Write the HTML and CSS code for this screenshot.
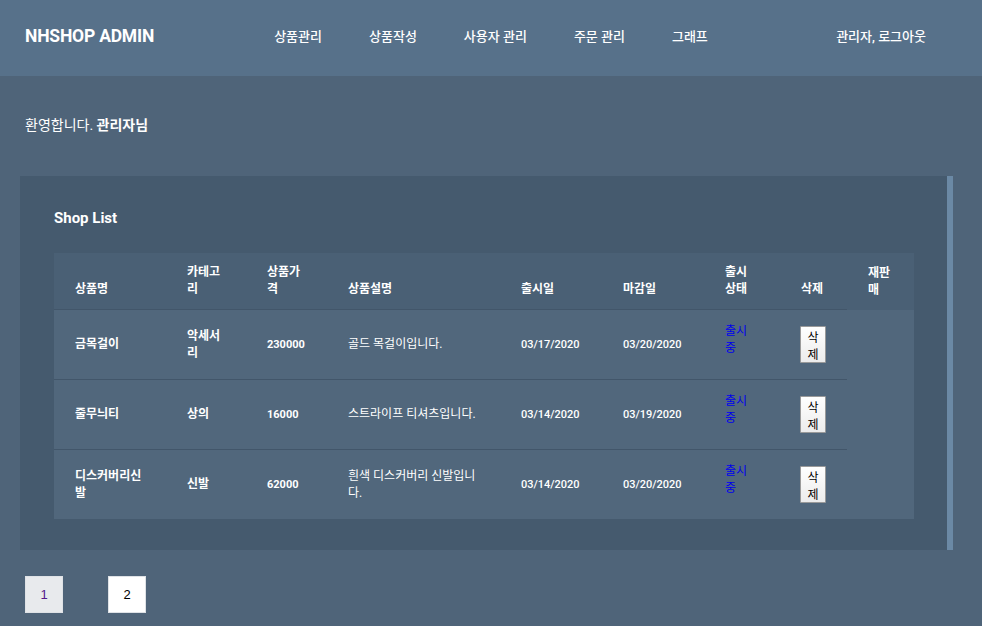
FILE: index.html
```html
<!DOCTYPE html>
<html lang="ko">
<head>
<meta charset="utf-8">
<title>NHSHOP ADMIN</title>
<link rel="stylesheet" href="styles.css">
</head>
<body>
<header class="topbar">
  <div class="logo">NHSHOP ADMIN</div>
  <nav class="nav">
    <a class="nav-link" href="#">상품관리</a>
    <a class="nav-link" href="#">상품작성</a>
    <a class="nav-link" href="#">사용자 관리</a>
    <a class="nav-link" href="#">주문 관리</a>
    <a class="nav-link" href="#">그래프</a>
  </nav>
  <div class="user">관리자, 로그아웃</div>
</header>
<main class="main">
  <p class="welcome">환영합니다. <span class="admin-name">관리자님</span></p>
  <section class="panel">
    <h2 class="panel-title">Shop List</h2>
    <table class="shop-table">
      <colgroup>
        <col class="c1"><col class="c2"><col class="c3"><col class="c4"><col class="c5"><col class="c6"><col class="c7"><col class="c8"><col class="c9">
      </colgroup>
      <thead>
        <tr>
          <th>상품명</th><th>카테고리</th><th>상품가격</th><th>상품설명</th><th>출시일</th><th>마감일</th><th class="st">출시상태</th><th>삭제</th><th>재판매</th>
        </tr>
      </thead>
      <tbody>
        <tr>
          <td class="strong">금목걸이</td><td class="strong">악세서리</td><td class="strong num">230000</td><td>골드 목걸이입니다.</td><td class="date">03/17/2020</td><td class="date">03/20/2020</td><td class="st"><a class="status" href="#">출시 중</a></td><td><button class="del">삭제</button></td>
        </tr>
        <tr>
          <td class="strong">줄무늬티</td><td class="strong">상의</td><td class="strong num">16000</td><td>스트라이프 티셔츠입니다.</td><td class="date">03/14/2020</td><td class="date">03/19/2020</td><td class="st"><a class="status" href="#">출시 중</a></td><td><button class="del">삭제</button></td>
        </tr>
        <tr>
          <td class="strong">디스커버리신발</td><td class="strong">신발</td><td class="strong num">62000</td><td>흰색 디스커버리 신발입니다.</td><td class="date">03/14/2020</td><td class="date">03/20/2020</td><td class="st"><a class="status" href="#">출시 중</a></td><td><button class="del">삭제</button></td>
        </tr>
      </tbody>
    </table>
  </section>
  <div class="pager">
    <a class="page page-current" href="#">1</a>
    <a class="page" href="#">2</a>
  </div>
</main>
</body>
</html>
```
FILE: styles.css
```css
* { box-sizing: border-box; }
html, body { margin: 0; padding: 0; }
body {
  background: #4f6479;
  color: #fff;
  font-family: Roboto, "Noto Sans CJK KR", sans-serif;
  width: 982px;
  height: 626px;
  overflow: hidden;
}
.topbar {
  height: 76px;
  background: #57718a;
  display: grid;
  grid-template-columns: 1fr auto 1fr;
  align-items: center;
  padding: 0 25px 5px 25px;
}
.logo {
  font-size: 17.5px;
  font-weight: 700;
  letter-spacing: -0.2px;
}
.nav {
  display: flex;
  gap: 47px;
}
.nav-link, .user {
  color: #fff;
  text-decoration: none;
  font-size: 13px;
  font-weight: 500;
}
.user {
  justify-self: end;
  margin-right: 31px;
}
.main { padding: 0; }
.welcome {
  margin: 0;
  padding: 38px 25px 0;
  height: 100px;
  font-size: 14px;
  font-weight: 400;
}
.admin-name { font-weight: 700; }
.panel {
  background: #455a6e;
  margin: 0 29px 0 20px;
  border-right: 6px solid #6b89a5;
  padding: 31px 33px 31px 34px;
  height: 374px;
}
.panel-title {
  margin: 0;
  font-size: 15px;
  font-weight: 700;
  line-height: 20px;
  height: 46px;
  padding-top: 1px;
}
.shop-table {
  width: 860px;
  table-layout: fixed;
  border-collapse: collapse;
  background: #51677c;
  font-size: 12px;
}
.c1 { width: 112px; }
.c2 { width: 80px; }
.c3 { width: 81px; }
.c4 { width: 173px; }
.c5 { width: 102px; }
.c6 { width: 102px; }
.c7 { width: 76px; }
.c8 { width: 67px; }
.c9 { width: 67px; }
.shop-table thead tr { background: #4a6075; }
.shop-table th {
  text-align: left;
  vertical-align: bottom;
  font-weight: 700;
  line-height: 17px;
  padding: 11px 20px 11px 21px;
  height: 56px;
}
.shop-table td {
  border-top: 1px solid #42566a;
  vertical-align: middle;
  line-height: 17px;
  padding: 16px 20px 16px 21px;
}
.shop-table .st { padding-right: 26px; }
.strong { font-weight: 700; }
.num { font-size: 11px; }
.date {
  font-size: 11px;
  font-weight: 500;
}
.status {
  display: block;
  margin-top: -10px;
  color: #0000ee;
  text-decoration: none;
  font-weight: 400;
}
.del {
  display: block;
  font-family: "Noto Sans CJK KR", sans-serif;
  font-size: 12px;
  font-weight: 400;
  line-height: 17px;
  padding: 0 6px;
  width: 26px;
  height: 37px;
  color: #000;
  background: linear-gradient(#ffffff, #ececec);
  border: 1px solid #9a9a9a;
  border-radius: 1px;
  margin: 0 0 0 -1px;
}
.pager {
  display: flex;
  gap: 45px;
  padding: 26px 25px 0;
}
.page {
  width: 38px;
  height: 37px;
  display: flex;
  align-items: center;
  justify-content: center;
  background: #fff;
  border: 1px solid #dfe2e6;
  color: #000;
  text-decoration: none;
  font-family: "Liberation Sans", Arial, sans-serif;
  font-size: 13px;
}
.page-current {
  background: #e8eaed;
  color: #551a8b;
}
```
